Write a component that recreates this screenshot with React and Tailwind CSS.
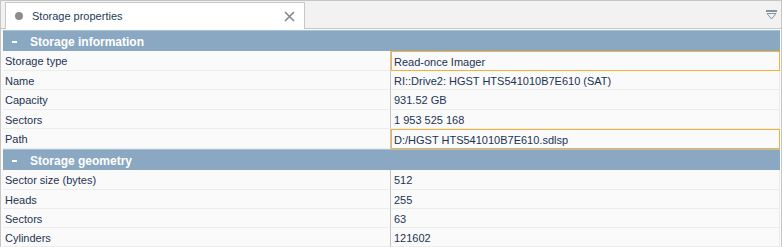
import React from "react";

const sections = [
  {
    title: "Storage information",
    rows: [
      { label: "Storage type", value: "Read-once Imager", edit: true, h: "h-[20px]" },
      { label: "Name", value: "RI::Drive2: HGST HTS541010B7E610 (SAT)", h: "h-[19px]" },
      { label: "Capacity", value: "931.52 GB", h: "h-[20px]" },
      { label: "Sectors", value: "1 953 525 168", h: "h-[19px]" },
      { label: "Path", value: "D:/HGST HTS541010B7E610.sdlsp", edit: true, h: "h-[20px]" },
    ],
  },
  {
    title: "Storage geometry",
    rows: [
      { label: "Sector size (bytes)", value: "512", h: "h-[20px]" },
      { label: "Heads", value: "255", h: "h-[19px]" },
      { label: "Sectors", value: "63", h: "h-[19px]" },
      { label: "Cylinders", value: "121602", h: "h-[19px]" },
    ],
  },
];

function Row({ label, value, edit, h }) {
  return (
    <div className={`flex ${h} text-[11px] text-[#1c3353]`}>
      <div className="w-[388px] shrink-0 flex items-center pl-[2px] pt-[2px] border-r border-b border-r-[#c4c4c4] border-b-[#ececec]">
        {label}
      </div>
      {edit ? (
        <div className="flex-1 flex items-center pl-[2px] pt-[2px] border border-[#f5b236]">{value}</div>
      ) : (
        <div className="flex-1 flex items-center pl-[3px] pt-[2px] border-b border-r border-[#ececec]">{value}</div>
      )}
    </div>
  );
}

export default function App() {
  return (
    <div className="w-[782px] h-[247px] overflow-hidden border-l border-t border-r border-[#c6c6c6] bg-[#fafafa] font-['Liberation_Sans',Arial,sans-serif]">
      {/* tab strip */}
      <div className="h-[28px] flex items-end pl-[4px] bg-[#f2f2f2] border-b border-[#c8c8c8]">
        <div className="w-[300px] h-[27px] -mb-px bg-white border border-b-0 border-[#c8c8c8] flex items-center">
          <span className="ml-[9px] w-[8px] h-[8px] rounded-full bg-[#8c8c8c]" />
          <span className="ml-[9px] text-[11px] text-[#1f3a5a]">Storage properties</span>
          <svg className="ml-auto mr-[9px]" width="11" height="11" viewBox="0 0 11 11">
            <path d="M1 1L10 10M10 1L1 10" stroke="#7c8893" strokeWidth="1.6" />
          </svg>
        </div>
        <div className="flex-1 h-full flex items-center justify-end pr-[4px]">
          <svg width="11" height="10" viewBox="0 0 11 10">
            <rect x="0" y="0" width="11" height="2" fill="#8594a2" />
            <path d="M1 3.5H10L5.5 9Z" fill="none" stroke="#8594a2" strokeWidth="1" />
          </svg>
        </div>
      </div>
      {/* property grid */}
      <div className="pl-[2px] pr-[1px] pt-px">
        {sections.map((s) => (
          <div key={s.title}>
            <div className="h-[21px] flex items-center pt-px bg-[#8aa8c1] border-t border-[#a6c2d8] text-white text-[12px] font-bold">
              <span className="ml-[9px] w-[5px] h-[2px] bg-white" />
              <span className="ml-[13px]">{s.title}</span>
            </div>
            {s.rows.map((r) => (
              <Row key={s.title + r.label} {...r} />
            ))}
          </div>
        ))}
      </div>
    </div>
  );
}
